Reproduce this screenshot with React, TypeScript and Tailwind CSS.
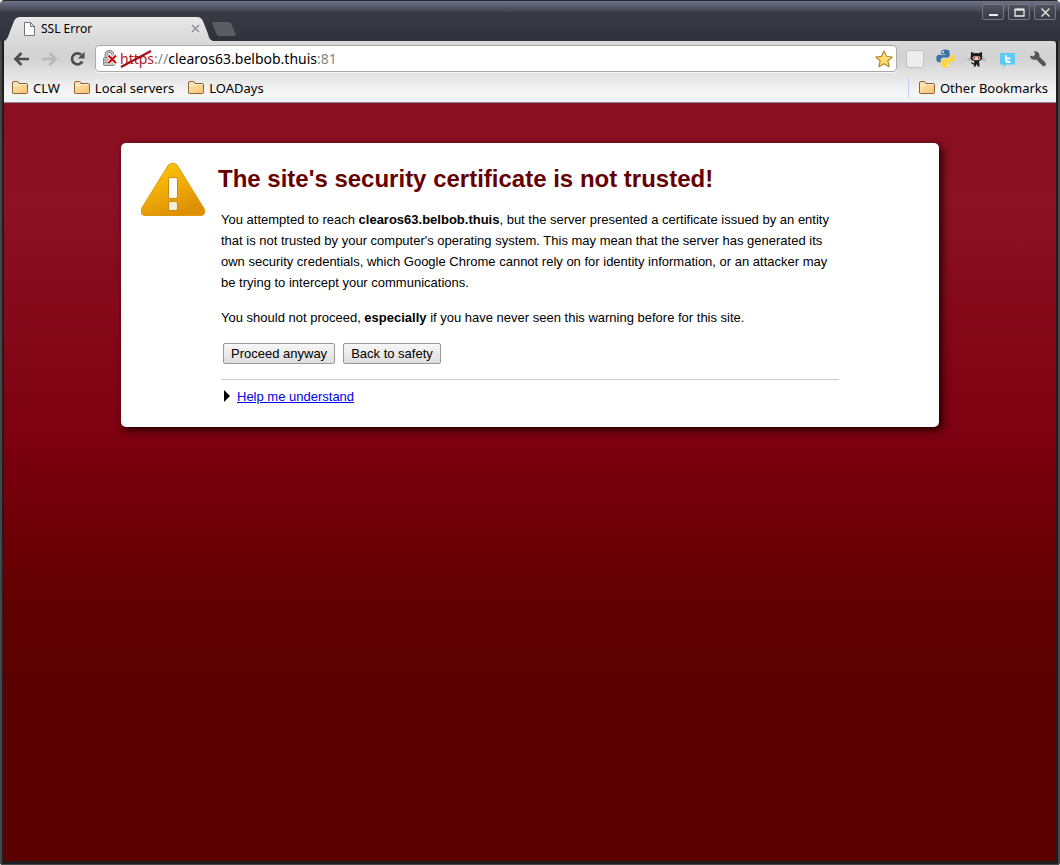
import React from 'react';

function Folder() {
  return (
    <svg width="16" height="14" viewBox="0 0 16 14" className="shrink-0" aria-hidden="true">
      <defs>
        <linearGradient id="folder" x1="0" y1="0" x2="1" y2="1">
          <stop offset="0" stopColor="#ffe8b8" />
          <stop offset="1" stopColor="#f8c070" />
        </linearGradient>
      </defs>
      <path d="M.5 12V2Q.5.5 2 .5H5.5Q6.500.5 7 2.500H14Q15.500 2.500 15.500 4V11.500Q15.500 12.500 14.500 12.500H1.500Q.5 12.500.5 11.500Z" fill="url(#folder)" stroke="#8c6239" />
      <path d="M1.500 4.500H6L7.500 3.500H14.500" fill="none" stroke="#fff3d6" />
    </svg>
  );
}

function Bookmark({ label }: { label: string }) {
  return (
    <a href="#" className="flex items-center gap-[5px] text-[13px] leading-5 whitespace-nowrap text-black">
      <Folder />
      {label}
    </a>
  );
}

function WindowButton({ label, children }: { label: string; children: React.ReactNode }) {
  return (
    <button aria-label={label} className="flex h-4 w-[22px] items-center justify-center rounded-[2px] border border-[#777985] bg-linear-to-b from-[#50525e] to-[#3a3b44]">
      <svg width="13" height="11" viewBox="0 0 13 11" fill="none" stroke="#ececec" strokeWidth="1.300">{children}</svg>
    </button>
  );
}

function TabStrip() {
  return (
    <header className="flex h-[41px] items-start justify-between bg-[linear-gradient(#25262c_0px,#25262c_1px,#72748a_1px,#505263_8px,#464855_11px,#393a43_12px,#30313a_41px)] px-1">
      <div className="flex items-end pt-4">
        <div className="relative flex h-[25px] w-[209px] items-center pr-[13px] pl-[19px]">
          <svg width="209" height="25" viewBox="0 0 209 25" className="absolute inset-0" aria-hidden="true">
            <defs>
              <linearGradient id="tab" x2="0" y2="1">
                <stop offset="0" stopColor="#e8e8e8" />
                <stop offset="1" stopColor="#d9d9d9" />
              </linearGradient>
            </defs>
            <path d="M0 25C3 24 4 21 5 18L10 5Q12 1 16 1H193Q197 1 199 5L204 18C205 22 206 24 209 25Z" fill="url(#tab)" />
          </svg>
          <svg width="12" height="14" viewBox="0 0 12 14" className="relative" aria-hidden="true">
            <path d="M1.500.5H7.500L11.500 4.500V13.500H1.500ZM7.500.5V4.500H11.500" fill="#fff" stroke="#777" />
          </svg>
          <span className="relative ml-[6px] flex-1 text-[12px] leading-4 text-black">SSL Error</span>
          <button aria-label="Close tab" className="relative">
            <svg width="9" height="9" viewBox="0 0 9 9" stroke="#929292" strokeWidth="1.500"><path d="M1 1L8 8M8 1L1 8" /></svg>
          </button>
        </div>
        <button aria-label="New tab" className="-ml-[2px] self-start pt-[5px]">
          <svg width="26" height="16" viewBox="0 0 26 16">
            <path d="M2 .5H18Q20 .5 21 3L25 13Q25.500 15 24 15.500H8Q6 15.500 5 13L.8 2.500Q.5.5 2 .5Z" fill="#5c5d62" stroke="#26272c" strokeWidth=".6" />
          </svg>
        </button>
      </div>
      <div className="flex gap-1 pt-1">
        <WindowButton label="Minimize"><path d="M2 8H11" strokeWidth="2" /></WindowButton>
        <WindowButton label="Maximize"><path d="M2 2.500H11V9H2Z" /><path d="M2 2.500H11" strokeWidth="1.800" /></WindowButton>
        <WindowButton label="Close"><path d="M2.500 1.500L10.500 9.500M10.500 1.500L2.500 9.500" /></WindowButton>
      </div>
    </header>
  );
}

function Toolbar() {
  return (
    <div className="flex h-[35px] items-center pr-[9px] pl-[9px]">
      <button aria-label="Back">
        <svg width="17" height="16" viewBox="0 0 17 16" fill="none" stroke="#4c4c4c" strokeWidth="2.600"><path d="M8.500 2L2.500 8L8.500 14M2.500 8H16" /></svg>
      </button>
      <button aria-label="Forward" className="ml-[11px]">
        <svg width="17" height="16" viewBox="0 0 17 16" fill="none" stroke="#b9b9b9" strokeWidth="2.600"><path d="M8.500 2L14.500 8L8.500 14M14.500 8H1" /></svg>
      </button>
      <button aria-label="Reload" className="ml-[11px]">
        <svg width="17" height="16" viewBox="0 0 17 16"><path d="M12.200 3.800A5.500 5.500 0 1 0 13.300 10.500" fill="none" stroke="#4c4c4c" strokeWidth="2.600" /><path d="M15.500.8V7.500H8.800Z" fill="#4c4c4c" /></svg>
      </button>
      <div className="ml-[9px] flex h-[27px] flex-1 items-center rounded-[4px] border border-[#aaa] bg-white pr-[3px] pl-[6px] shadow-[0_1px_0_#f5f5f5]">
        <svg width="17" height="17" viewBox="0 0 17 17" aria-label="Certificate error" role="img">
          <path d="M4 8V5a3.500 3.500 0 0 1 7 0V8" fill="none" stroke="#858585" strokeWidth="3" />
          <path d="M4 8V5a3.500 3.500 0 0 1 7 0V8" fill="none" stroke="#ddd" />
          <rect x="1.500" y="7.500" width="11" height="8" rx="1" fill="#c4c4c4" stroke="#858585" />
          <path d="M2 10H12M2 12.500H12" stroke="#999" />
          <path d="M6.500 5.500L14 13M14 5.500L6.500 13" stroke="#fff" strokeWidth="4" />
          <path d="M6.500 5.500L14 13M14 5.500L6.500 13" stroke="#d00c0c" strokeWidth="2.200" />
        </svg>
        <div className="ml-[1px] flex-1 text-[14px] leading-5 whitespace-nowrap text-[#858585]">
          <span className="relative text-[#b4141c]">
            https
            <svg width="32" height="20" viewBox="0 0 32 20" className="absolute top-0 left-0" aria-hidden="true"><path d="M1 18L31 2" stroke="#a00d14" strokeWidth="2" /></svg>
          </span>
          ://<span className="text-black">clearos63.belbob.thuis</span>:81
        </div>
        <button aria-label="Bookmark this page">
          <svg width="18" height="18" viewBox="0 0 18 18"><path d="M9 1L11.400 6.300L17.200 7L12.900 10.800L14.100 16.700L9 13.700L3.900 16.700L5.100 10.800L.8 7L6.600 6.300Z" fill="#fbdc6a" stroke="#b8862e" strokeWidth="1.200" strokeLinejoin="round" /><path d="M9 3.500L10.700 7.300L14.500 7.800" fill="none" stroke="#fff3c0" /></svg>
        </button>
      </div>
      <button aria-label="Blank extension" className="ml-[9px] size-[18px] rounded-[2px] border border-[#c2c2c2] bg-[#ececec]" />
      <button aria-label="Python" className="ml-[12px]">
        <svg width="19" height="19" viewBox="0 0 19 19">
          <path d="M9.300.5C6.500.5 5.200 1.400 5.200 3V5H9.500V5.700H3.200C1.300 5.700.3 7.300.3 9.600S1.300 13.300 3 13.300H4.700V11.200C4.700 9.600 6 8.500 7.500 8.500H11.300C12.700 8.500 13.600 7.600 13.600 6.300V3C13.600 1.300 12 .5 9.300.5Z" fill="#3b73a8" />
          <path d="M9.700 18.500C12.500 18.500 13.800 17.600 13.800 16V14H9.500V13.300H15.800C17.700 13.300 18.700 11.700 18.700 9.400S17.700 5.700 16 5.700H14.500V7.600C14.500 9.300 13 10.300 11.500 10.300H7.700C6.300 10.300 5.400 11.400 5.400 12.700V16C5.400 17.700 7 18.500 9.700 18.500Z" fill="#ffd63e" />
          <circle cx="7.200" cy="2.900" r=".9" fill="#fff" /><circle cx="11.800" cy="16.100" r=".9" fill="#fff" />
        </svg>
      </button>
      <button aria-label="GitHub" className="ml-[12px]">
        <svg width="19" height="18" viewBox="0 0 19 18">
          <path d="M0 9L4 8.500M1 10.500L5 9.500M19 9L15 8.500M18 10.500L14 9.500" stroke="#999" strokeWidth=".6" />
          <path d="M4.300 1.800L7 3.200Q9.500 2.700 12 3.200L14.700 1.800Q15.300 3.300 15 5Q16 9 13.300 10.500L12 11L12.600 16.500H10.600L10.200 14.500H9.200L8.800 16.500H6.800L7 14.800Q4.700 14.500 4 12.300L5 12Q5.800 13.600 7.200 13.200L7.300 11Q3 10.500 3.700 6.500L4 5Q3.700 3.300 4.300 1.800Z" fill="#1c1c1c" />
          <path d="M6.300 6.600Q9.500 6 12.700 6.600Q13.800 7.300 13.300 8.700Q12.300 10.200 9.500 10.200T5.700 8.700Q5.200 7.300 6.300 6.600Z" fill="#f4c8ae" />
          <ellipse cx="7.400" cy="8" rx=".7" ry="1" fill="#7c302a" /><ellipse cx="11.600" cy="8" rx=".7" ry="1" fill="#7c302a" />
        </svg>
      </button>
      <button aria-label="Twitter" className="ml-[13px]">
        <svg width="17" height="18" viewBox="0 -2 17 18">
          <path d="M1 1H16V12.500H7.500L4.500 15.500V12.500H1Z" fill="#5dcaf0" />
          <path d="M7 4V8.500Q7 10 8.500 10H10.500M7 6.500H10.500" fill="none" stroke="#fff" strokeWidth="1.900" strokeLinecap="round" />
        </svg>
      </button>
      <button aria-label="Settings" className="ml-[13px]">
        <svg width="18" height="18" viewBox="0 0 18 18"><path d="M1 5.500L4 6.500L6.300 4.500L5 1.300Q8 .7 9.700 2.900Q10.800 4.800 10.300 6.600L16.300 12.500Q17.700 14.300 16.300 15.800Q14.800 17 13.200 15.600L7.500 9.500Q4.500 10.500 2.300 8.700Q1 7.400 1 5.500Z" fill="#555" /></svg>
      </button>
    </div>
  );
}

function WarningIcon() {
  return (
    <svg width="65" height="55" viewBox="1 1 65 55" className="shrink-0" role="img" aria-label="Warning">
      <defs>
        <linearGradient id="warn" x1="0" y1="0" x2=".5" y2="1">
          <stop offset="0" stopColor="#fccc08" />
          <stop offset=".5" stopColor="#f3b008" />
          <stop offset="1" stopColor="#de8f04" />
        </linearGradient>
      </defs>
      <path d="M28.500 3Q33 -.5 37 3L64 46.500Q67 53 60.500 54H5Q-1 53 1.500 46.500Z" fill="url(#warn)" />
      <path d="M28.500 3Q33 -.5 37 3L64 46.500Q66 52.500 60.500 53.500H5Q0 52.500 1.500 46.500Z" fill="none" stroke="#dd9805" />
      <rect x="28.500" y="15.500" width="9" height="21" rx="2" fill="#fff" stroke="#c98707" />
      <rect x="28.500" y="39.500" width="9" height="9" rx="2" fill="#f1f0df" stroke="#c98707" />
    </svg>
  );
}

const dialogButton =
  'h-[21px] rounded-[2px] border border-[#999] bg-linear-to-b from-[#f7f7f7] to-[#dedede] px-[7px] text-[13px] leading-4 text-black';

function Interstitial() {
  return (
    <main className="flex-1 bg-[linear-gradient(#8a0f20_0px,#8c1122_100px,#7c0010_340px,#600000_510px,#5a0000_600px)] px-6 pt-10 font-['Liberation_Sans',Arial,sans-serif]">
      <section className="mx-auto flex w-full max-w-[818px] rounded-[5px] bg-white px-5 pt-5 pb-5 shadow-[3px_3px_8px_#200000]">
        <WarningIcon />
        <div className="ml-3 flex-1 pr-20">
          <h1 className="text-2xl leading-8 font-bold text-[#660000]">The site's security certificate is not trusted!</h1>
          <div className="mt-[14px] pl-[3px] text-[13px] leading-[21px] text-black">
            <p>
              You attempted to reach <strong>clearos63.belbob.thuis</strong>, but the server presented a certificate issued by an entity that is not trusted by your computer's operating system. This may mean that the server has generated its own security credentials, which Google Chrome cannot rely on for identity information, or an attacker may be trying to intercept your communications.
            </p>
            <p className="mt-[14px]">
              You should not proceed, <strong>especially</strong> if you have never seen this warning before for this site.
            </p>
            <div className="mt-[15px] flex gap-2 pl-[2px]">
              <button className={dialogButton}>Proceed anyway</button>
              <button className={dialogButton}>Back to safety</button>
            </div>
            <hr className="mt-[15px] border-[#ccc]" />
            <div className="mt-[6px] flex items-center pl-[3px]">
              <svg width="6" height="13" viewBox="0 0 6 13" aria-hidden="true"><path d="M0 0L6 6L0 12Z" fill="#000" /></svg>
              <a href="#" className="ml-[7px] text-[#0000ee] underline">Help me understand</a>
            </div>
          </div>
        </div>
      </section>
    </main>
  );
}

export default function App() {
  return (
    <div className="flex min-h-screen flex-col overflow-hidden rounded-t-[5px] rounded-b-[3px] bg-[#242424] font-['Noto_Sans','Open_Sans',sans-serif]">
      <TabStrip />
      <div className="flex flex-1 flex-col border-x-2 border-b border-[#464646]">
        <div className="flex flex-1 flex-col border-x-2 border-b-3 border-[#1e1e1e]">
          <div className="rounded-tr-[3px] border-b border-[#8a8aa4] bg-[linear-gradient(#d9d9d9,#d2d2d2_18px,#f4f4f4_50px,#f4f4f4)]">
            <Toolbar />
            <nav className="flex h-[26px] items-center justify-between px-2 pb-[2px]">
              <div className="flex gap-[14px]">
                <Bookmark label="CLW" />
                <Bookmark label="Local servers" />
                <Bookmark label="LOADays" />
              </div>
              <div className="border-l border-[#c5cdf5] pl-[10px]">
                <Bookmark label="Other Bookmarks" />
              </div>
            </nav>
          </div>
          <Interstitial />
        </div>
      </div>
    </div>
  );
}
